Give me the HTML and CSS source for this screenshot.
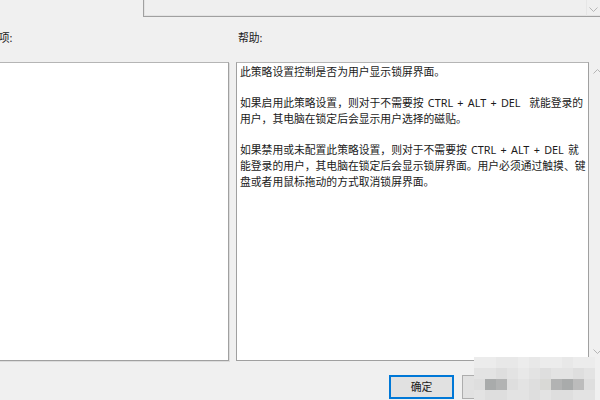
FILE: index.html
```html
<!DOCTYPE html>
<html lang="zh-CN">
<head>
<meta charset="utf-8">
<link rel="stylesheet" href="styles.css">
</head>
<body>
<div class="page">
  <div class="top-row">
    <div class="top-box">
      <div class="top-scroll">
        <svg width="9" height="6" viewBox="0 0 9 6"><polyline points="0.5,0.5 4.5,4.5 8.5,0.5" fill="none" stroke="#b5b5b5" stroke-width="1"/></svg>
      </div>
    </div>
  </div>
  <div class="labels">
    <div class="label label-left">选项:</div>
    <div class="label label-right">帮助:</div>
  </div>
  <div class="panels">
    <div class="options-box"></div>
    <div class="help-wrap">
      <div class="help-box">
        <p>此策略设置控制是否为用户显示锁屏界面。</p>
        <p>如果启用此策略设置，则对于不需要按 CTRL + ALT + DEL&nbsp; 就能登录的<br>用户，其电脑在锁定后会显示用户选择的磁贴。</p>
        <p>如果禁用或未配置此策略设置，则对于不需要按 CTRL + ALT + DEL 就<br>能登录的用户，其电脑在锁定后会显示锁屏界面。用户必须通过触摸、键<br>盘或者用鼠标拖动的方式取消锁屏界面。</p>
      </div>
      <div class="scrollbar">
        <svg width="9" height="6" viewBox="0 0 9 6"><polyline points="0.5,5.5 4.5,1.5 8.5,5.5" fill="none" stroke="#b5b5b5" stroke-width="1"/></svg>
        <svg width="9" height="6" viewBox="0 0 9 6"><polyline points="0.5,0.5 4.5,4.5 8.5,0.5" fill="none" stroke="#b5b5b5" stroke-width="1"/></svg>
      </div>
    </div>
  </div>
  <div class="buttons">
    <button class="btn btn-primary">确定</button>
    <button class="btn">取消</button>
  </div>
  <div class="mosaic">
    <div class="cell l0"></div><div class="cell l0"></div><div class="cell l1"></div><div class="cell l1"></div><div class="cell l0"></div><div class="cell l1"></div><div class="cell l0"></div><div class="cell l0"></div><div class="cell l1"></div><div class="cell l0"></div><div class="cell l0"></div>
    <div class="cell l2"></div><div class="cell l2"></div><div class="cell l3"></div><div class="cell l2"></div><div class="cell l1"></div><div class="cell l2"></div><div class="cell l3"></div><div class="cell l2"></div><div class="cell l2"></div><div class="cell l3"></div><div class="cell l2"></div>
    <div class="cell l3"></div><div class="cell d1"></div><div class="cell d2"></div><div class="cell l3"></div><div class="cell l2"></div><div class="cell l3"></div><div class="cell l4"></div><div class="cell d2"></div><div class="cell d1"></div><div class="cell d3"></div><div class="cell l3"></div>
    <div class="cell l2"></div><div class="cell l3"></div><div class="cell l3"></div><div class="cell l2"></div><div class="cell l2"></div><div class="cell l3"></div><div class="cell l2"></div><div class="cell l3"></div><div class="cell l3"></div><div class="cell l2"></div><div class="cell l2"></div>
  </div>
</div>
</body>
</html>
```

FILE: styles.css
```css
html, body {
  margin: 0;
  padding: 0;
  background: #f0f0f0;
}
.page {
  position: relative;
  width: 600px;
  height: 400px;
  overflow: hidden;
  background: #f0f0f0;
  font-family: "Noto Sans", "Noto Sans CJK SC", sans-serif;
  font-size: 10.8px;
  color: #1a1a1a;
}
.top-row {
  height: 18px;
  display: flex;
}
.top-box {
  margin-left: 143px;
  flex: 1;
  height: 16px;
  border-left: 1px solid #a0a0a0;
  border-bottom: 1px solid #a0a0a0;
  box-shadow: inset 1px 0 0 #e3e3e3, inset 0 -1px 0 #e3e3e3;
  background: #efefef;
  display: flex;
  justify-content: flex-end;
  margin-right: -10px;
}
.top-scroll {
  width: 24px;
  border-left: 1px solid #e6e6e6;
  display: flex;
  align-items: center;
  padding-left: 2px;
  box-sizing: border-box;
  padding-top: 3px;
}
.labels {
  height: 44px;
  display: flex;
  box-sizing: border-box;
  padding-top: 12px;
  line-height: 16px;
}
.label-left {
  margin-left: -12px;
  width: 250px;
}
.panels {
  height: 299px;
  display: flex;
  gap: 7px;
  margin-left: -10px;
}
.options-box {
  width: 239px;
  box-sizing: border-box;
  background: #fff;
  border: 1px solid #a0a0a0;
  border-top-color: #b5b5b5;
  box-shadow: 1px 1px 0 #dcdcdc;
}
.help-wrap {
  flex: 1;
  display: flex;
  margin-right: -10px;
}
.help-box {
  width: 353px;
  box-sizing: border-box;
  background: #fff;
  border: 1px solid #a0a0a0;
  border-top-color: #b5b5b5;
  padding: 1px 0 0 3px;
  line-height: 16px;
  white-space: nowrap;
  word-spacing: 1.5px;
}
.help-box p {
  margin: 0 0 15px 0;
}
.scrollbar {
  width: 21px;
  display: flex;
  flex-direction: column;
  justify-content: space-between;
  padding: 6px 0 6px 4px;
  box-sizing: border-box;
}
.buttons {
  display: flex;
  gap: 8px;
  margin-top: 14px;
  padding-left: 389px;
}
.btn {
  width: 65px;
  height: 24px;
  margin: 0;
  padding: 0;
  background: #e1e1e1;
  border: 1px solid #adadad;
  font-family: "Noto Sans", "Noto Sans CJK SC", sans-serif;
  font-size: 10.8px;
  color: #1a1a1a;
  line-height: 20px;
}
.btn-primary {
  border: 2px solid #0078d7;
}
.mosaic {
  position: absolute;
  left: 474px;
  top: 357px;
  display: grid;
  grid-template-columns: repeat(11, 11px);
  grid-auto-rows: 11px;
}
.l0 { background: #ececec; }
.l1 { background: #e8e8e8; }
.l2 { background: #e3e3e3; }
.l3 { background: #dedede; }
.l4 { background: #d9d9d6; }
.d1 { background: #a9abab; }
.d2 { background: #b2b3b3; }
.d3 { background: #bcbcbc; }
```
